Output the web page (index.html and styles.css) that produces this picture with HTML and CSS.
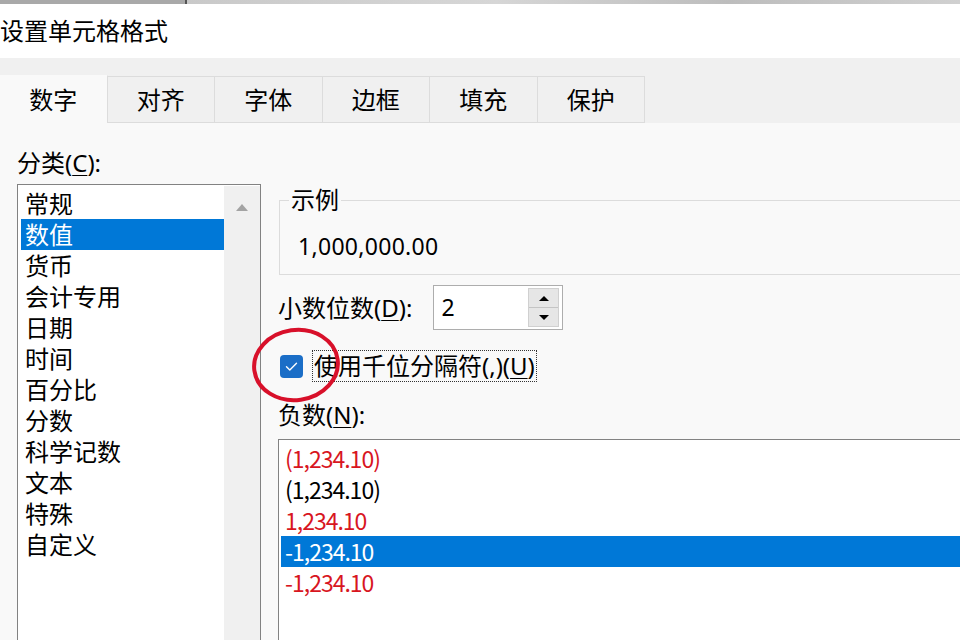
FILE: index.html
```html
<!DOCTYPE html>
<html lang="zh-CN">
<head>
<meta charset="utf-8">
<title>设置单元格格式</title>
<link rel="stylesheet" href="styles.css">
</head>
<body>
<div class="page">
  <div class="topstrip"><span class="ts-a"></span><span class="ts-b"></span><span class="ts-c"></span></div>
  <div class="titlebar">设置单元格格式</div>
  <div class="tabs">
    <div class="tab active">数字</div>
    <div class="tab">对齐</div>
    <div class="tab">字体</div>
    <div class="tab">边框</div>
    <div class="tab">填充</div>
    <div class="tab">保护</div>
  </div>
  <div class="content">
    <div class="left">
      <div class="label cat-label">分类(<u>C</u>):</div>
      <div class="catlist">
        <ul class="items">
          <li>常规</li>
          <li class="sel">数值</li>
          <li>货币</li>
          <li>会计专用</li>
          <li>日期</li>
          <li>时间</li>
          <li>百分比</li>
          <li>分数</li>
          <li>科学记数</li>
          <li>文本</li>
          <li>特殊</li>
          <li>自定义</li>
        </ul>
        <div class="scrollbar"><span class="arrow-up"></span></div>
      </div>
    </div>
    <div class="right">
      <fieldset class="sample">
        <legend>示例</legend>
        <div class="sample-value">1,000,000.00</div>
      </fieldset>
      <div class="decimal-row">
        <span class="label">小数位数(<u>D</u>):</span>
        <div class="spinner">
          <span class="spin-value">2</span>
          <div class="spin-btns">
            <span class="spin-btn"><span class="tri-up"></span></span>
            <span class="spin-btn"><span class="tri-down"></span></span>
          </div>
        </div>
      </div>
      <div class="check-row">
        <span class="checkbox">
          <svg width="23" height="23" viewBox="0 0 23 23"><polyline points="6.5,11.8 9.8,15 16.5,8.2" fill="none" stroke="#fff" stroke-width="1.4" stroke-linecap="round" stroke-linejoin="round"/></svg>
        </span>
        <span class="check-label">使用千位分隔符(,)(<u>U</u>)</span>
      </div>
      <div class="label neg-label">负数(<u>N</u>):</div>
      <ul class="neglist">
        <li class="red">(1,234.10)</li>
        <li>(1,234.10)</li>
        <li class="red">1,234.10</li>
        <li class="sel">-1,234.10</li>
        <li class="red">-1,234.10</li>
      </ul>
    </div>
    <svg class="annot" width="100" height="84" viewBox="0 0 100 84"><ellipse cx="50" cy="42" rx="42" ry="35" fill="none" stroke="#d8102a" stroke-width="4" transform="rotate(-8 50 42)"/></svg>
  </div>
</div>
</body>
</html>
```

FILE: styles.css
```css
* { box-sizing: border-box; }
html, body { margin: 0; padding: 0; }
body {
  width: 960px;
  height: 640px;
  overflow: hidden;
  background: #f9f9f9;
  font-family: "Noto Sans", "Noto Sans CJK SC", sans-serif;
  font-size: 24px;
  color: #000;
}
.page { width: 960px; height: 640px; overflow: hidden; }
.topstrip { display: flex; height: 4px; }
.ts-a { width: 185px; background: #a9a9a9; }
.ts-b { width: 2px; background: #555; }
.ts-c { flex: 1; background: linear-gradient(90deg, #c9c9c9, #d6d6d6 40%, #bdbdbd 70%, #d0d0d0); }
.titlebar {
  height: 54px;
  background: #fff;
  display: flex;
  align-items: center;
  line-height: 30px;
  padding-bottom: 1px;
}
.tabs {
  height: 65px;
  background: #f0f0f0;
  display: flex;
  align-items: flex-end;
}
.tab {
  width: 107.5px;
  height: 47px;
  border-top: 1px solid #dcdcdc;
  border-right: 1px solid #dcdcdc;
  border-bottom: 1px solid #dcdcdc;
  display: flex;
  align-items: center;
  justify-content: center;
  line-height: 30px;
  background: #f0f0f0;
}
.tab.active {
  height: 48px;
  background: #f9f9f9;
  border-bottom: none;
  border-top: 1px solid #f9f9f9;
}
.content {
  position: relative;
  display: flex;
  gap: 17px;
  padding-left: 17px;
  height: 517px;
}
.label { line-height: 31px; height: 31px; }
.label u, .check-label u { text-decoration-thickness: 1px; text-underline-offset: 3px; }
.left { width: 244px; flex: none; }
.cat-label { margin-top: 24px; margin-bottom: 6px; }
.catlist {
  display: flex;
  height: 470px;
  border: 1px solid #828282;
  background: #fff;
}
.items {
  list-style: none;
  margin: 0;
  padding: 3px 0 0 3px;
  width: 206px;
}
.items li {
  height: 31px;
  line-height: 31px;
  padding-left: 4px;
  white-space: nowrap;
}
.items li.sel, .neglist li.sel { background: #0078d7; color: #fff; }
.scrollbar {
  width: 36px;
  background: #f0f0f0;
  margin-top: 1px;
  display: flex;
  justify-content: center;
  padding-top: 18px;
}
.arrow-up {
  width: 0; height: 0;
  border-left: 6px solid transparent;
  border-right: 6px solid transparent;
  border-bottom: 7px solid #a3a3a3;
}
.right { flex: none; width: 720px; }
.sample {
  margin: 63px 0 0 1px;
  padding: 17px 0 12px 18px;
  border: 1px solid #dcdcdc;
  border-right: none;
  min-width: 0;
  width: 700px;
}
.sample legend {
  margin-left: -9px;
  padding: 0 2px;
  line-height: 28px;
  height: 28px;
}
.sample-value { line-height: 31px; height: 31px; font-size: 23px; letter-spacing: 0.3px; }
.decimal-row {
  display: flex;
  align-items: center;
  gap: 21px;
  margin-top: 10px;
}
.spinner {
  width: 130px;
  height: 45px;
  border: 1px solid #adadad;
  background: #fff;
  display: flex;
  align-items: center;
  justify-content: space-between;
  padding: 2px 3px 2px 7px;
}
.spin-value { line-height: 31px; font-size: 23px; }
.spin-btns {
  width: 31px;
  height: 39px;
  display: flex;
  flex-direction: column;
  border: 1px solid #d0d0d0;
  background: #e6e6e6;
}
.spin-btn {
  flex: 1;
  display: flex;
  align-items: center;
  justify-content: center;
}
.spin-btn + .spin-btn { border-top: 1px solid #c4c4c4; }
.tri-up {
  width: 0; height: 0;
  border-left: 5px solid transparent;
  border-right: 5px solid transparent;
  border-bottom: 5px solid #000;
}
.tri-down {
  width: 0; height: 0;
  border-left: 5px solid transparent;
  border-right: 5px solid transparent;
  border-top: 5px solid #000;
}
.check-row {
  display: flex;
  align-items: center;
  gap: 9px;
  margin-top: 20px;
  height: 32px;
  padding-left: 2px;
}
.checkbox {
  width: 23px;
  height: 23px;
  border-radius: 4px;
  background: #1b6ec7;
  display: flex;
}
.check-label {
  border: 1px dotted #333;
  line-height: 30px;
  height: 32px;
  padding: 0 1px;
}
.neg-label { margin-top: 17px; margin-bottom: 9px; }
.neglist {
  list-style: none;
  margin: 0;
  padding: 3px 0 0 2px;
  height: 230px;
  width: 720px;
  border: 1px solid #828282;
  border-right: none;
  background: #fff;
}
.neglist li {
  height: 31px;
  line-height: 31px;
  padding-left: 4px;
  font-family: "Noto Sans CJK SC", sans-serif;
  font-size: 23px;
  letter-spacing: -1px;
}
.neglist li.red { color: #d8161f; }
.annot {
  position: absolute;
  left: 246px;
  top: 200px;
}
```
